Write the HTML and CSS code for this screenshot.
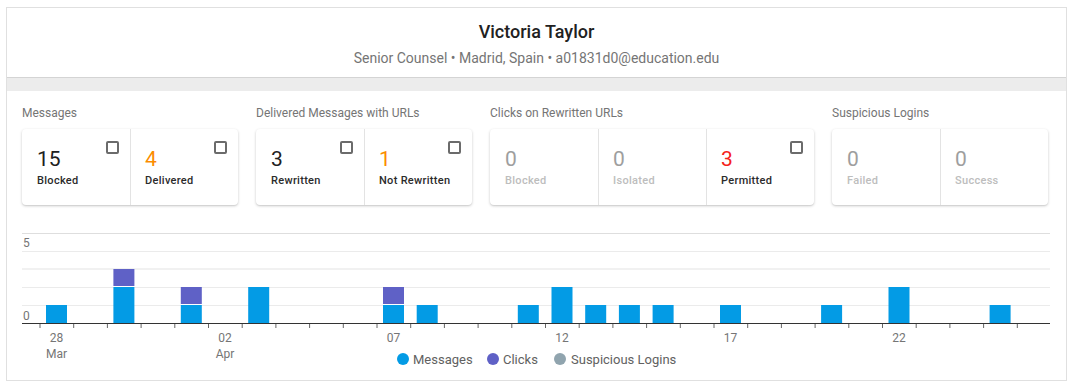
FILE: index.html
```html
<!DOCTYPE html>
<html>
<head>
  <title>User Summary</title>
  <link rel="stylesheet" href="styles.css">
</head>
<body>
  <div class="profile">
    <div class="profile-head">
      <div class="name">Victoria Taylor</div>
      <div class="meta">Senior Counsel &bull; Madrid, Spain &bull; a01831d0@education.edu</div>
    </div>
    <div class="band"></div>

    <div class="content">
      <div class="stats">
        <div class="group">
          <div class="group-title">Messages</div>
          <div class="card">
            <div class="cell">
              <span class="check"></span>
              <div class="value">15</div>
              <div class="label">Blocked</div>
            </div>
            <div class="cell">
              <span class="check"></span>
              <div class="value warn">4</div>
              <div class="label">Delivered</div>
            </div>
          </div>
        </div>

        <div class="group">
          <div class="group-title">Delivered Messages with URLs</div>
          <div class="card">
            <div class="cell">
              <span class="check"></span>
              <div class="value">3</div>
              <div class="label">Rewritten</div>
            </div>
            <div class="cell">
              <span class="check"></span>
              <div class="value warn">1</div>
              <div class="label">Not Rewritten</div>
            </div>
          </div>
        </div>

        <div class="group">
          <div class="group-title">Clicks on Rewritten URLs</div>
          <div class="card">
            <div class="cell off">
              <div class="value">0</div>
              <div class="label">Blocked</div>
            </div>
            <div class="cell off">
              <div class="value">0</div>
              <div class="label">Isolated</div>
            </div>
            <div class="cell">
              <span class="check"></span>
              <div class="value alert">3</div>
              <div class="label">Permitted</div>
            </div>
          </div>
        </div>

        <div class="group">
          <div class="group-title">Suspicious Logins</div>
          <div class="card">
            <div class="cell off">
              <div class="value">0</div>
              <div class="label">Failed</div>
            </div>
            <div class="cell off">
              <div class="value">0</div>
              <div class="label">Success</div>
            </div>
          </div>
        </div>
      </div>

      <div class="chart">
        <svg width="1028" height="144" viewBox="0 0 1028 144">
          <!-- grid -->
          <line x1="0" y1="5.5" x2="1028" y2="5.5" stroke="#dedede"/>
          <line x1="0" y1="23.5" x2="1028" y2="23.5" stroke="#ebebeb"/>
          <line x1="0" y1="41" x2="1028" y2="41" stroke="#f1f1f1" stroke-width="2"/>
          <line x1="0" y1="59.5" x2="1028" y2="59.5" stroke="#ebebeb"/>
          <line x1="0" y1="77.5" x2="1028" y2="77.5" stroke="#ebebeb"/>
          <text class="axis-text" x="1" y="19">5</text>
          <text class="axis-text" x="1" y="92">0</text>

          <!-- messages -->
          <g fill="#039be5">
            <rect x="24" y="77" width="21" height="18"/>
            <rect x="91.4" y="59" width="21" height="36"/>
            <rect x="158.8" y="77" width="21" height="18"/>
            <rect x="226.2" y="59" width="21" height="36"/>
            <rect x="361" y="77" width="21" height="18"/>
            <rect x="394.7" y="77" width="21" height="18"/>
            <rect x="495.8" y="77" width="21" height="18"/>
            <rect x="529.5" y="59" width="21" height="36"/>
            <rect x="563.2" y="77" width="21" height="18"/>
            <rect x="596.9" y="77" width="21" height="18"/>
            <rect x="630.6" y="77" width="21" height="18"/>
            <rect x="698" y="77" width="21" height="18"/>
            <rect x="799.1" y="77" width="21" height="18"/>
            <rect x="866.5" y="59" width="21" height="36"/>
            <rect x="967.6" y="77" width="21" height="18"/>
          </g>
          <!-- clicks -->
          <g fill="#5f61c6">
            <rect x="91.4" y="41" width="21" height="17"/>
            <rect x="158.8" y="59" width="21" height="17"/>
            <rect x="361" y="59" width="21" height="17"/>
          </g>

          <!-- x axis -->
          <line x1="0" y1="95.5" x2="1028" y2="95.5" stroke="#333"/>
          <path d="M18 96v4m33.7 -4v4m33.7 -4v4m33.7 -4v4m33.7 -4v4m33.7 -4v4m33.7 -4v4m33.7 -4v4m33.7 -4v4m33.7 -4v4m33.7 -4v4m33.7 -4v4m33.7 -4v4m33.7 -4v4m33.7 -4v4m33.7 -4v4m33.7 -4v4m33.7 -4v4m33.7 -4v4m33.7 -4v4m33.7 -4v4m33.7 -4v4m33.7 -4v4m33.7 -4v4m33.7 -4v4m33.7 -4v4m33.7 -4v4m33.7 -4v4m33.7 -4v4m33.7 -4v4" stroke="#666" fill="none"/>
          <g class="axis-text" text-anchor="middle">
            <text x="34.5" y="114">28</text>
            <text x="34.5" y="130">Mar</text>
            <text x="203" y="114">02</text>
            <text x="203" y="130">Apr</text>
            <text x="371.5" y="114">07</text>
            <text x="540" y="114">12</text>
            <text x="708.5" y="114">17</text>
            <text x="877" y="114">22</text>
          </g>

          <!-- legend -->
          <g class="legend-text">
            <circle cx="381" cy="131" r="6" fill="#039be5"/>
            <text x="391" y="135.5">Messages</text>
            <circle cx="471" cy="131" r="6" fill="#5f61c6"/>
            <text x="481" y="135.5">Clicks</text>
            <circle cx="538" cy="131" r="6" fill="#90a4ae"/>
            <text x="549" y="135.5">Suspicious Logins</text>
          </g>
        </svg>
      </div>
    </div>
  </div>
</body>
</html>
```

FILE: styles.css
```css
body {
  margin: 7px 8px 8px 6px;
  font-family: Roboto, "Noto Sans", sans-serif;
  color: #212121;
  background: #fff;
}
.profile {
  border: 1px solid #e0e0e0;
  background: #fff;
}
.profile-head {
  text-align: center;
  padding: 12px 0 9px;
}
.name {
  font-size: 18px;
  font-weight: 500;
  line-height: 24px;
  color: #212121;
}
.meta {
  margin-top: 4px;
  font-size: 14px;
  line-height: 20px;
  color: #757575;
}
.band {
  height: 13px;
  background: #ececec;
  border-top: 1px solid #d4d4d4;
}
.content {
  padding: 14px 16px 8px 15px;
}
.stats {
  display: flex;
  gap: 18px;
}
.group-title {
  font-size: 12px;
  line-height: 16px;
  color: #757575;
  margin-bottom: 8px;
}
.card {
  display: flex;
  background: #fff;
  border-radius: 4px;
  box-shadow: 0 1px 3px rgba(0, 0, 0, 0.2), 0 1px 1px rgba(0, 0, 0, 0.05);
}
.cell {
  position: relative;
  width: 108px;
  height: 76px;
  box-sizing: border-box;
  padding: 18px 0 0 14px;
  border-left: 1px solid #e3e3e3;
}
.cell:first-child {
  border-left: none;
  padding-left: 15px;
}
.value {
  font-size: 21px;
  line-height: 24px;
  color: #212121;
}
.value.warn {
  color: #fb8c00;
}
.value.alert {
  color: #f5221b;
}
.label {
  margin-top: 2px;
  font-size: 11px;
  font-weight: 500;
  line-height: 16px;
  letter-spacing: 0.3px;
  color: #2b2b2b;
}
.cell.off .value {
  color: #9e9e9e;
}
.cell.off .label {
  color: #bdbdbd;
}
.check {
  position: absolute;
  top: 12px;
  right: 11px;
  width: 13px;
  height: 13px;
  box-sizing: border-box;
  border: 2px solid #6b6b6b;
  border-radius: 2px;
}
.chart {
  margin-top: 23px;
}
.chart svg {
  display: block;
}
.axis-text {
  font-family: Roboto, sans-serif;
  font-size: 12px;
  fill: #757575;
}
.legend-text {
  font-family: Roboto, sans-serif;
  font-size: 13px;
  fill: #616161;
}
```
